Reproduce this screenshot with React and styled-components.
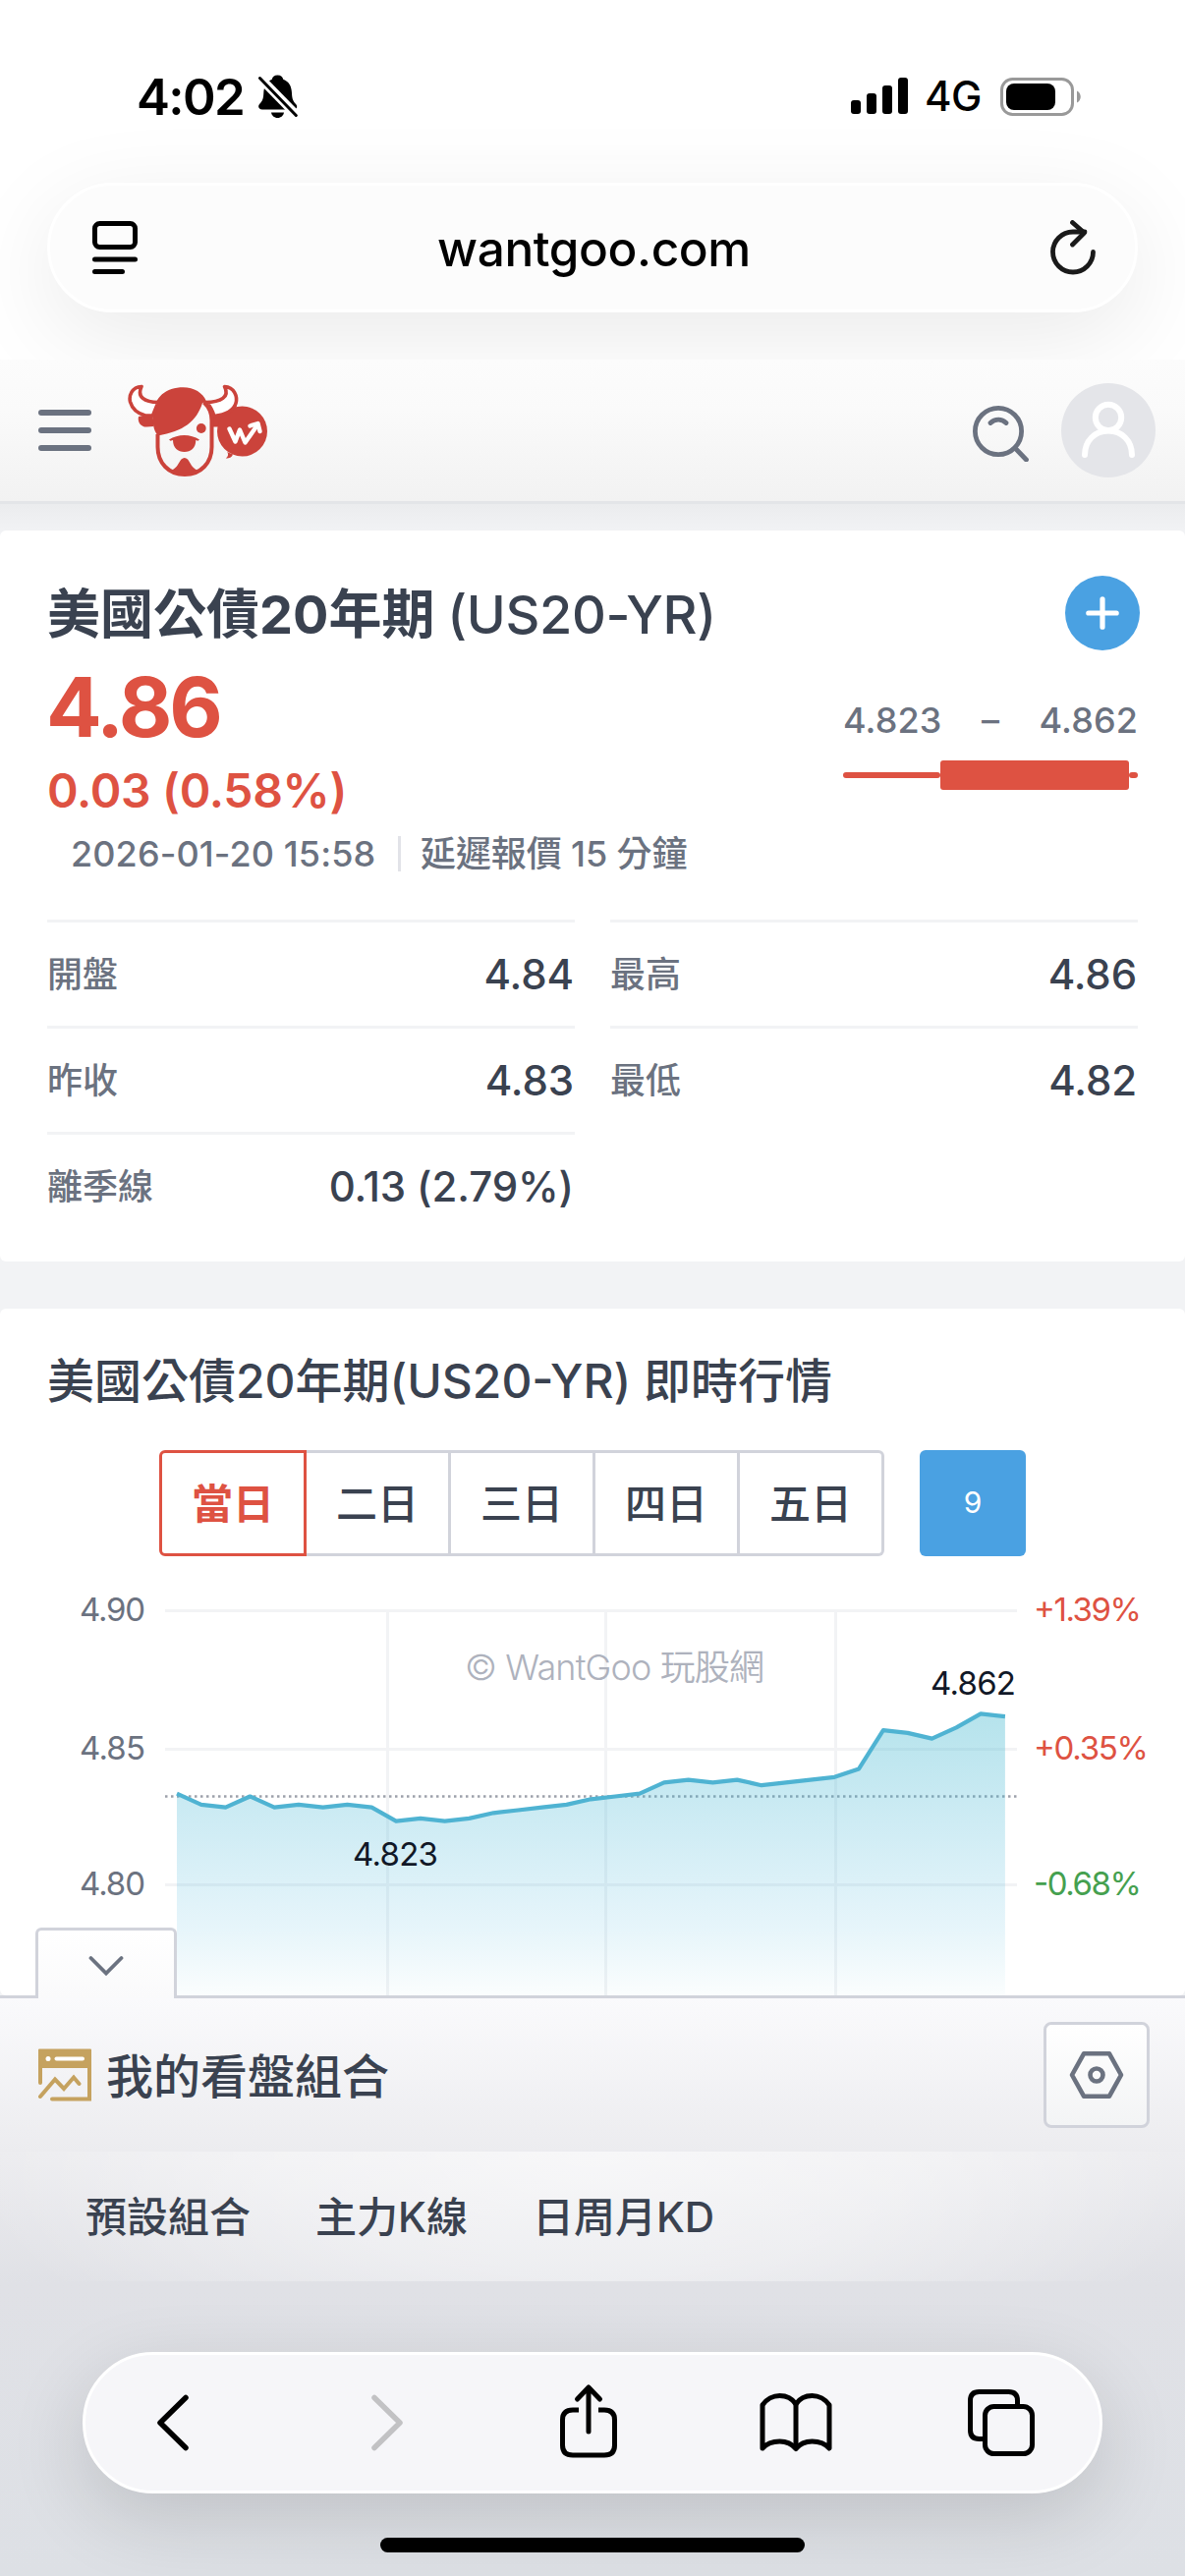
import styled, { createGlobalStyle } from "styled-components";

const GlobalStyle = createGlobalStyle`
  * { box-sizing: border-box; }
  body {
    margin: 0;
    background: #f2f3f5;
    font-family: Inter, "Noto Sans CJK TC", sans-serif;
    color: #3a4250;
  }
  svg { display: block; flex: none; }
`;

const Screen = styled.div`
  width: 1206px;
  height: 2622px;
  display: flex;
  flex-direction: column;
  overflow: hidden;
`;

// Browser chrome (top)
const BrowserTop = styled.div`
  height: 366px;
  background: #fff;
  flex: none;
`;

const StatusBar = styled.div`
  height: 186px;
  padding: 68px 105px 0 139px;
  display: flex;
  justify-content: space-between;
  align-items: flex-start;
  color: #000;
`;

const StatusGroup = styled.div`
  display: flex;
  align-items: center;
  height: 60px;
`;

const Clock = styled.span`
  font-size: 51px;
  font-weight: 600;
  width: 124px;
  letter-spacing: -1.6px;
  line-height: 59px;
`;

const Network = styled.span`
  font-size: 42px;
  font-weight: 500;
  width: 77px;
  margin-left: 17px;
  letter-spacing: -0.5px;
  line-height: 62px;
`;

const AddressBar = styled.div`
  height: 132px;
  margin: 0 48px;
  padding: 0 38px 0 43px;
  border-radius: 66px;
  border: 3px solid #fff;
  background: #fcfcfc;
  box-shadow: 0 24px 96px rgba(0, 0, 0, 0.085);
  display: flex;
  align-items: center;
  justify-content: space-between;
`;

const Address = styled.span`
  padding-top: 2px;
  font-size: 49.5px;
  font-weight: 500;
  color: #000;
  line-height: 60px;
  letter-spacing: -0.4px;
`;

// Site header
const SiteHeader = styled.header`
  flex: none;
  height: 147px;
  padding: 0 30px 0 39px;
  display: flex;
  align-items: center;
  border-bottom: 3px solid #e3e5e8;
  background: linear-gradient(#fcfcfc, #fafafa 35%, #f2f2f2);
`;

const Burger = styled.div`
  display: flex;
  flex-direction: column;
  gap: 12px;
  width: 54px;
  margin-right: 37px;

  span {
    height: 6px;
    border-radius: 3px;
    background: #6b7280;
  }
`;

const HeaderActions = styled.div`
  margin-left: auto;
  display: flex;
  align-items: center;
  gap: 32px;
`;

const Avatar = styled.div`
  width: 96px;
  height: 96px;
  border-radius: 50%;
  background: #e4e5e9;
  display: flex;
  align-items: center;
  justify-content: center;
`;

// Content
const Main = styled.main`
  flex: none;
  height: 1518px;
  padding-top: 27px;
  background: linear-gradient(#ebecee, #f2f3f5 30px);
  display: flex;
  flex-direction: column;
  gap: 48px;
  overflow: hidden;
`;

const Card = styled.section`
  background: #fff;
  border-radius: 6px;
  flex: none;
`;

const QuoteCard = styled(Card)`
  height: 744px;
  padding: 46px 48px 0;
`;

const TitleRow = styled.div`
  height: 76px;
  display: flex;
  justify-content: space-between;
  align-items: center;
  margin-right: -2px;
`;

const StockName = styled.h1`
  margin: 0;
  padding-top: 3px;
  font-size: 54px;
  font-weight: 700;
  line-height: 76px;
  white-space: nowrap;

  small {
    font-size: 54px;
    font-weight: 540;
    letter-spacing: -0.3px;
  }
`;

const AddButton = styled.button`
  width: 76px;
  height: 76px;
  padding: 0;
  border: 0;
  border-radius: 50%;
  background: #4aa1e2;
  display: flex;
  align-items: center;
  justify-content: center;
`;

const PriceRow = styled.div`
  height: 180px;
  display: flex;
  justify-content: space-between;
`;

const Price = styled.div`
  padding-top: 10px;
  color: #de5242;
`;

const Last = styled.div`
  margin-left: -1px;
  font-size: 84px;
  font-weight: 700;
  line-height: 96px;
  letter-spacing: -3px;
`;

const Change = styled.div`
  font-size: 48px;
  font-weight: 600;
  line-height: 74px;
  letter-spacing: -0.3px;
`;

const DayRange = styled.div`
  width: 300px;
  padding-top: 44px;
`;

const RangeText = styled.div`
  display: flex;
  justify-content: space-between;
  font-size: 36px;
  line-height: 54px;
  font-weight: 450;
  letter-spacing: 0.1px;
  color: #6b7280;
`;

const RangeBar = styled.div`
  display: flex;
  align-items: center;
  height: 30px;
  margin-top: 14px;
`;

const Wick = styled.span`
  width: ${(p) => p.$width}px;
  height: 6px;
  border-radius: 3px;
  background: #de5242;
`;

const Candle = styled.span`
  width: 192px;
  height: 30px;
  border-radius: 3px;
  background: #de5242;
`;

const QuoteTime = styled.div`
  display: flex;
  align-items: center;
  height: 54px;
  padding-left: 24px;
  font-size: 36px;
  line-height: 54px;
  font-weight: 450;
  color: #6b7280;
  white-space: nowrap;

  time {
    width: 333px;
    letter-spacing: 0.1px;
  }

  span {
    padding-left: 20px;
    letter-spacing: -0.1px;
  }

  i {
    width: 3px;
    height: 36px;
    background: #e2e3e8;
  }
`;

const Stats = styled.div`
  margin-top: 40px;
  display: grid;
  grid-template-columns: 1fr 1fr;
  column-gap: 36px;
`;

const Stat = styled.div`
  height: 108px;
  border-top: 3px solid #f2f3f5;
  display: flex;
  align-items: center;
  justify-content: space-between;
  padding-right: 1px;
`;

const StatLabel = styled.span`
  font-size: 36px;
  line-height: 54px;
  font-weight: 450;
  color: #6b7280;
`;

const StatValue = styled.span`
  font-size: 42px;
  line-height: 60px;
  font-weight: 500;
  letter-spacing: -0.1px;
`;

const ChartCard = styled(Card)`
  height: 699px;
`;

const ChartTitle = styled.h2`
  margin: 0;
  padding: 38px 48px 0;
  height: 144px;
  font-size: 48px;
  line-height: 72px;
  font-weight: 500;
  white-space: nowrap;
`;

const PeriodRow = styled.div`
  display: flex;
  justify-content: center;
  gap: 36px;
`;

const Periods = styled.div`
  display: flex;
`;

const Period = styled.button`
  width: ${(p) => (p.$active ? 150 : 147)}px;
  height: 108px;
  padding: 0 0 6px;
  font: inherit;
  font-size: 42px;
  font-weight: ${(p) => (p.$active ? 700 : 500)};
  color: ${(p) => (p.$active ? "#de5242" : "#3a4250")};
  background: #fff;
  border: 3px solid ${(p) => (p.$active ? "#de5242" : "#d1d3db")};
  border-left-width: ${(p) => (p.$active ? 3 : 0)}px;

  &:first-child { border-radius: 6px 0 0 6px; }
  &:last-child { border-radius: 0 6px 6px 0; }
`;

const CountButton = styled.button`
  width: 108px;
  height: 108px;
  padding: 0 0 2px;
  border: 0;
  border-radius: 6px;
  background: #4aa1e2;
  color: #fff;
  font: inherit;
  font-size: 30px;
`;

// Bottom dock
const Dock = styled.section`
  flex: none;
  height: 591px;
  border-top: 3px solid #d1d3db;
  background: linear-gradient(#fafafc, #ececef 156px, #e0e1e6 290px, #dde0e5);
  position: relative;
`;

const CollapseTab = styled.div`
  position: absolute;
  left: 36px;
  top: -72px;
  width: 144px;
  height: 72px;
  padding-top: 3px;
  border: 3px solid #d1d3db;
  border-bottom: 0;
  border-radius: 6px 6px 0 0;
  background: linear-gradient(#fff, #fafafb);
  display: flex;
  align-items: center;
  justify-content: center;
`;

const DockHeader = styled.div`
  height: 156px;
  padding: 0 36px 0 39px;
  display: flex;
  align-items: center;
`;

const DockTitle = styled.span`
  margin-left: 14px;
  padding-top: 3px;
  font-size: 48px;
  line-height: 72px;
  font-weight: 500;
`;

const SettingsButton = styled.button`
  margin-left: auto;
  width: 108px;
  height: 108px;
  padding: 0;
  border: 3px solid #d1d3db;
  border-radius: 8px;
  background: linear-gradient(#fff, #f3f4f5);
  display: flex;
  align-items: center;
  justify-content: center;
`;

const Groups = styled.nav`
  height: 132px;
  padding: 0 0 6px 87px;
  display: flex;
  align-items: center;
  gap: 66px;
  font-size: 42px;
  font-weight: 500;
  background: radial-gradient(ellipse 640px 260px at 50% 0, rgba(255, 255, 255, 0.6), rgba(255, 255, 255, 0.4) 50%, rgba(255, 255, 255, 0));
`;

const Toolbar = styled.div`
  margin: 72px 84px 0;
  height: 144px;
  border: 3px solid #fff;
  border-radius: 72px;
  background: #f6f6f9;
  box-shadow: 0 24px 80px rgba(0, 0, 0, 0.14);
  display: grid;
  grid-template-columns: 178px 257px 154px 267px 152px;
  align-items: center;
`;

const Tool = styled.div`
  display: flex;
  justify-content: center;
`;

const HomeIndicator = styled.div`
  width: 432px;
  height: 15px;
  margin: 45px auto 0;
  border-radius: 8px;
  background: #000;
  position: relative;
`;

const Bell = () => (
  <svg width="40" height="44" viewBox="0 0 40 44">
    <path d="M19.500 0.500c3.500 0 5.200 1.800 5.700 4.200 6 2.200 8.500 7 8.800 14 .2 6.500 1.500 8.500 4.500 11.800 1.500 2 .5 5-2.500 5H4c-3.500 0-5-3-3-5.500 3-3.300 4-5 4.300-11.300.4-7 3-11.800 8.500-14 .5-2.400 2.200-4.200 5.700-4.200z" />
    <path d="M13 38.500h13c-.5 3-3 5.500-6.500 5.500S13.500 41.500 13 38.500z" />
    <path d="M1 2.500l39 40" stroke="#fff" strokeWidth="9" />
    <path d="M1.500 3.500l36.800 38" stroke="#000" strokeWidth="3" strokeLinecap="round" />
  </svg>
);

const Signal = () => (
  <svg width="58" height="38" viewBox="0 0 58 38">
    <rect x="0" y="23" width="10" height="14" rx="3" />
    <rect x="16" y="16" width="10" height="21" rx="3" />
    <rect x="32" y="8" width="10" height="29" rx="3" />
    <rect x="48" y="0" width="10" height="37" rx="3" />
  </svg>
);

const Battery = () => (
  <svg width="83" height="39" viewBox="0 0 83 39">
    <rect x="1.500" y="1.500" width="72" height="36" rx="11" fill="none" stroke="#999" strokeWidth="3" />
    <rect x="6" y="6" width="50" height="27" rx="8" />
    <path d="M78 13.500c5 2 5 10 0 12z" fill="#999" />
  </svg>
);

const Reader = () => (
  <svg width="46" height="54" viewBox="0 0 46 54" fill="none" stroke="#000" strokeWidth="5" strokeLinecap="round">
    <rect x="2.500" y="2.500" width="41" height="24" rx="5" />
    <path d="M2.500 39h41M2.500 51.500h28" />
  </svg>
);

const Reload = () => (
  <svg width="48" height="56" viewBox="0 0 48 56" fill="none" stroke="#1a1a1a" strokeWidth="4.800" strokeLinecap="round" strokeLinejoin="round">
    <path d="M43.500 32.500A20.500 20.500 0 1 1 23 12h12" />
    <path d="M22.500 2.500L34.500 13L22.500 25" />
  </svg>
);

const Logo = () => (
  <svg width="143" height="96" viewBox="0 0 143 96">
    <g fill="#cb433b">
      <path d="M25.500 31L11 34c-1.500 6 3 11 8.500 10.600l7-.6z" />
      <path d="M85 33c8-1 15-4 20-9l6-2-4 20-16 2.400h-6z" />
      <path d="M30.500 53.500C26 47 25.500 42 25.800 32 27 14 39 4.300 56.500 4.300c11 0 20 5.500 23.500 14.200l-4 1.800C70 39 57 49 30.500 53.500z" />
      <circle cx="74.800" cy="46" r="4.900" />
      <path d="M42 57.500c9-6 22-6 31 0l-1.500 1.200-2.200-.7c0 8-5 12-11.600 12S46 66 46 58l-2.500.7z" />
      <path d="M45 88.500c5-2 7-8 9.500-11 2-2 4.500-2 6.500 0 2.500 3 4.500 9 9.500 11-8 6-18 6-25.500 0z" />
      <circle cx="116.500" cy="49" r="25.500" />
      <path d="M101 70c2 2 1 5-1.200 6.500 4 0 6-1 7.200-4z" />
    </g>
    <g fill="#fff" stroke="#cb433b" strokeWidth="3.600" strokeLinejoin="round">
      <path d="M31 19.500C17 19.500 9 14 14 3.500 4 4 1 13 2.500 19c2 7 8 12 15.500 14h7.500z" />
      <path d="M79 19.500C95 19.500 104 14 98.500 3.500c10 .5 13.500 10 11.500 17-2 6.500-10 11.500-22 13-2-6-4-10-7-13z" />
    </g>
    <path d="M30.500 52v13c0 16 11 28 27.500 28s27.500-12 27.500-28V38c0-7-3-14-8-18.500" fill="none" stroke="#cb433b" strokeWidth="4" />
    <g fill="none" stroke="#fff" strokeWidth="4.400" strokeLinecap="round" strokeLinejoin="round">
      <path d="M103.500 46.500l6 13 4.500-12 5.500 13L131 44" />
      <path d="M124.500 43.500l8-2.500 2 8" />
    </g>
  </svg>
);

const Search = () => (
  <svg width="60" height="64" viewBox="0 -4 60 64" fill="none" stroke="#6b7280" strokeLinecap="round">
    <circle cx="28" cy="29" r="23.600" strokeWidth="4.800" />
    <path d="M20 20.500c4.500-4.500 11.500-4.500 16 0M45.500 46.500L56.500 58" strokeWidth="4.800" />
  </svg>
);

const Person = () => (
  <svg width="56" height="60" viewBox="0 0 56 60" fill="none" stroke="#fff" strokeWidth="6" strokeLinecap="round">
    <circle cx="28" cy="17" r="13.200" />
    <path d="M4 55c0-14 10-24.500 24-24.500S52 41 52 55" />
  </svg>
);

const Plus = () => (
  <svg width="34" height="34" viewBox="0 0 34 34" stroke="#fff" strokeWidth="5.200" strokeLinecap="round">
    <path d="M17 2.800v28.400M2.800 17h28.400" />
  </svg>
);

const GroupIcon = () => (
  <svg width="55" height="54" viewBox="0 0 55 54" fill="none" stroke="#c5a25f" strokeWidth="4" strokeLinecap="round">
    <path d="M0 1.500a1 1 0 0 1 1-1h52a1 1 0 0 1 1 1V20H0z" fill="#c5a25f" stroke="none" />
    <path d="M2 19v16M52 19v32.500H14M2 49l15-17.500 9 9.500L36 29.500l5.500 6.500" />
    <circle cx="10" cy="10.500" r="2.500" fill="#fff" stroke="none" />
    <path d="M18.500 10.500h26.500" stroke="#fff" />
  </svg>
);

const HexNut = () => (
  <svg width="56" height="50" viewBox="0 0 56 50" fill="none" stroke="#6b7280" strokeWidth="4.600">
    <path d="M15 3.300h26L53 25 41 46.700H15L3 25z" strokeLinejoin="round" />
    <circle cx="28" cy="25" r="6.500" />
  </svg>
);

const toolIcons = [
  <svg width="34" height="58" viewBox="0 0 34 58" fill="none" stroke="#000" strokeWidth="5.500" strokeLinecap="round" strokeLinejoin="round">
    <path d="M30 3.500L4 29l26 25.500" />
  </svg>,
  <svg width="34" height="58" viewBox="0 0 34 58" fill="none" stroke="#c2c2c4" strokeWidth="5.500" strokeLinecap="round" strokeLinejoin="round">
    <path d="M4 3.500L30 29 4 54.500" />
  </svg>,
  <svg width="60" height="80" viewBox="0 0 60 80" fill="none" stroke="#000" strokeWidth="5" strokeLinecap="round" strokeLinejoin="round">
    <path d="M20 27h-6c-7 0-10.500 3.500-10.500 10v26c0 6.500 3.500 10 10.500 10h32c7 0 10.500-3.500 10.500-10V37c0-6.500-3.500-10-10.500-10h-6" strokeLinecap="butt" />
    <path d="M30 49V4M18.500 16L30 4l11.500 12" />
  </svg>,
  <svg width="74" height="62" viewBox="0 0 74 62" fill="none" stroke="#000" strokeWidth="5" strokeLinecap="round" strokeLinejoin="round">
    <path d="M37 12C33 6 27 3.500 20.500 3.500S7 7 3 13v44c4-4.500 10-7 17.500-7S33 52.500 37 57.500C41 52.500 46 50 53.500 50S67 52.500 71 57V13C67 7 60 3.500 53.500 3.500S41 6 37 12z" />
    <path d="M37 12v45" />
  </svg>,
  <svg width="68" height="68" viewBox="0 0 68 68" fill="none" stroke="#000" strokeWidth="5">
    <path d="M15 50.500h-3.500c-6 0-9-3-9-9v-30c0-6 3-9 9-9h30c6 0 9 3 9 9V15" />
    <rect x="17.500" y="17.500" width="48" height="48" rx="9" />
  </svg>,
];

// Intraday prices
const prices = [
  4.833, 4.829, 4.828, 4.832, 4.828, 4.829, 4.828, 4.829, 4.828, 4.823, 4.824, 4.823,
  4.824, 4.826, 4.827, 4.828, 4.829, 4.831, 4.832, 4.833, 4.837, 4.838, 4.837, 4.838,
  4.836, 4.837, 4.838, 4.839, 4.842, 4.856, 4.855, 4.853, 4.857, 4.862, 4.861,
];

const toX = (i) => 180 + i * 24.79;
const toY = (price) => 269.7 - (price - 4.823) * 2805;
const line = prices.map((p, i) => `${toX(i).toFixed(1)},${toY(p).toFixed(1)}`).join(" ");

const axis = [
  { y: 55.5, price: "4.90", pct: "+1.39%", color: "#de5242", width: 108 },
  { y: 196.5, price: "4.85", pct: "+0.35%", color: "#de5242", width: 115 },
  { y: 334.5, price: "4.80", pct: "-0.68%", color: "#45a04f", width: 108 },
];

const PriceChart = () => (
  <svg width="1206" height="447" viewBox="0 0 1206 447" fontFamily='Inter, "Noto Sans CJK TC", sans-serif' fontSize="33">
    <defs>
      <linearGradient id="area" gradientUnits="userSpaceOnUse" x1="0" y1="160" x2="0" y2="455">
        <stop offset="0" stopColor="#46b9cf" stopOpacity="0.400" />
        <stop offset="0.750" stopColor="#46b4dc" stopOpacity="0.130" />
        <stop offset="1" stopColor="#46b4cf" stopOpacity="0.010" />
      </linearGradient>
    </defs>
    {axis.map((a) => (
      <path key={a.y} d={`M168 ${a.y}H1035`} stroke="#f2f3f5" strokeWidth="3" />
    ))}
    <path d="M394.500 57V447M616.500 57V447M850.500 57V447" stroke="#f2f3f5" strokeWidth="3" />
    <text x="473" y="126" fontSize="36" fontWeight="350" fill="#aeb2bd" textLength="305">© WantGoo 玩股網</text>
    <path d="M168 244.500H1035" stroke="#9da1ab" strokeWidth="2.500" strokeDasharray="2.500 3.500" />
    <polygon points={`180,447 ${line} 1022.900,447`} fill="url(#area)" />
    <polyline points={line} fill="none" stroke="#4fb3d2" strokeWidth="4.200" strokeLinejoin="round" />
    {axis.map((a) => (
      <g key={a.price}>
        <text x="81" y={a.y + 10.5} fill="#6b7280" textLength="67">{a.price}</text>
        <text x="1052" y={a.y + 10.5} fill={a.color} textLength={a.width + 2}>{a.pct}</text>
      </g>
    ))}
    <text x="947" y="141" fill="#111827" textLength="87">4.862</text>
    <text x="359" y="315" fill="#111827" textLength="87">4.823</text>
  </svg>
);

const stats = [
  { label: "開盤", value: "4.84" },
  { label: "最高", value: "4.86" },
  { label: "昨收", value: "4.83" },
  { label: "最低", value: "4.82" },
  { label: "離季線", value: "0.13 (2.79%)" },
];

const periods = ["當日", "二日", "三日", "四日", "五日"];
const groups = ["預設組合", "主力K線", "日周月KD"];

const App = () => {
  return (
    <Screen>
      <GlobalStyle />
      <BrowserTop>
        <StatusBar>
          <StatusGroup>
            <Clock>4:02</Clock>
            <Bell />
          </StatusGroup>
          <StatusGroup>
            <Signal />
            <Network>4G</Network>
            <Battery />
          </StatusGroup>
        </StatusBar>
        <AddressBar>
          <Reader />
          <Address>wantgoo.com</Address>
          <Reload />
        </AddressBar>
      </BrowserTop>

      <SiteHeader>
        <Burger>
          <span />
          <span />
          <span />
        </Burger>
        <Logo />
        <HeaderActions>
          <Search />
          <Avatar>
            <Person />
          </Avatar>
        </HeaderActions>
      </SiteHeader>

      <Main>
        <QuoteCard>
          <TitleRow>
            <StockName>
              美國公債20年期 <small>(US20-YR)</small>
            </StockName>
            <AddButton>
              <Plus />
            </AddButton>
          </TitleRow>
          <PriceRow>
            <Price>
              <Last>4.86</Last>
              <Change>0.03 (0.58%)</Change>
            </Price>
            <DayRange>
              <RangeText>
                <span>4.823</span>
                <span>–</span>
                <span>4.862</span>
              </RangeText>
              <RangeBar>
                <Wick $width={99} />
                <Candle />
                <Wick $width={9} />
              </RangeBar>
            </DayRange>
          </PriceRow>
          <QuoteTime>
            <time>2026-01-20 15:58</time>
            <i />
            <span>延遲報價 15 分鐘</span>
          </QuoteTime>
          <Stats>
            {stats.map((s) => (
              <Stat key={s.label}>
                <StatLabel>{s.label}</StatLabel>
                <StatValue>{s.value}</StatValue>
              </Stat>
            ))}
          </Stats>
        </QuoteCard>

        <ChartCard>
          <ChartTitle>美國公債20年期(US20-YR) 即時行情</ChartTitle>
          <PeriodRow>
            <Periods>
              {periods.map((p, i) => (
                <Period key={p} $active={i === 0}>{p}</Period>
              ))}
            </Periods>
            <CountButton>9</CountButton>
          </PeriodRow>
          <PriceChart />
        </ChartCard>
      </Main>

      <Dock>
        <CollapseTab>
          <svg width="36" height="22" viewBox="0 0 36 22" fill="none" stroke="#6b7280" strokeWidth="3.800" strokeLinecap="round">
            <path d="M2.500 3L18 18.500 33.500 3" />
          </svg>
        </CollapseTab>
        <DockHeader>
          <GroupIcon />
          <DockTitle>我的看盤組合</DockTitle>
          <SettingsButton>
            <HexNut />
          </SettingsButton>
        </DockHeader>
        <Groups>
          {groups.map((g) => (
            <span key={g}>{g}</span>
          ))}
        </Groups>
        <Toolbar>
          {toolIcons.map((icon, i) => (
            <Tool key={i}>{icon}</Tool>
          ))}
        </Toolbar>
        <HomeIndicator />
      </Dock>
    </Screen>
  );
};

export default App;
